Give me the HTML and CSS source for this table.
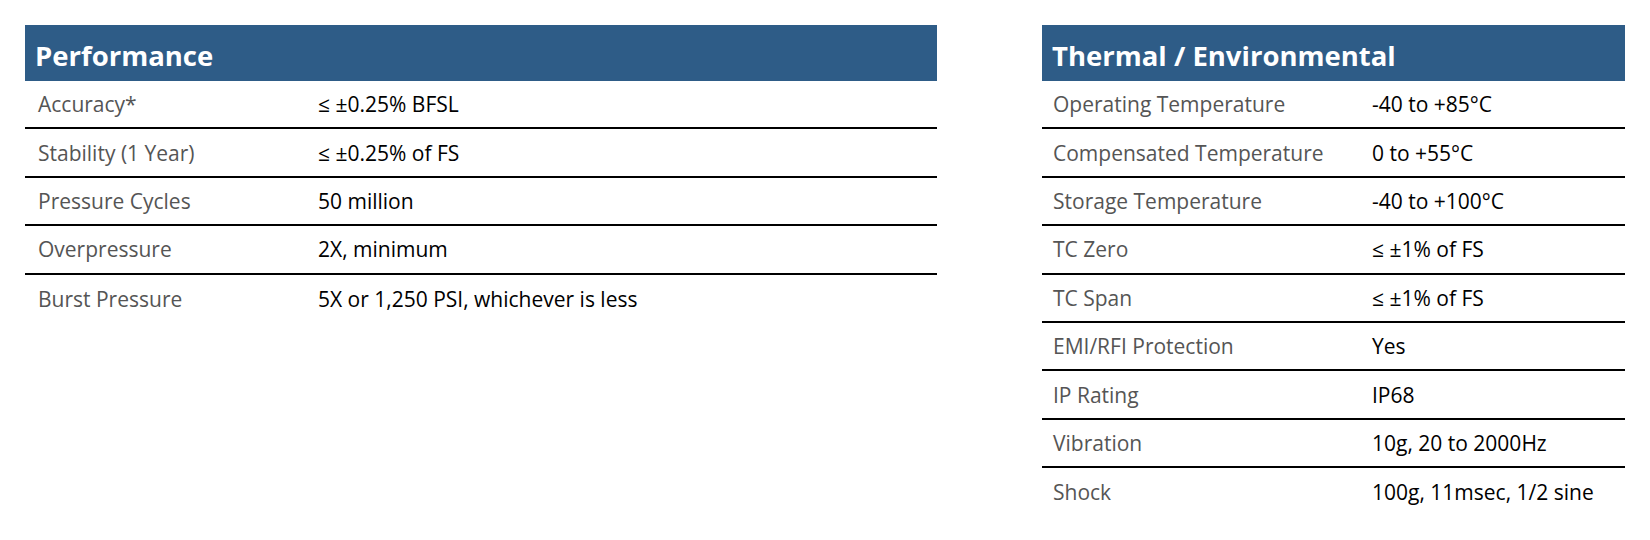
FILE: index.html
```html
<!DOCTYPE html>
<html lang="en">
<head>
<meta charset="utf-8">
<title>Specifications</title>
<link rel="stylesheet" href="styles.css">
</head>
<body>
<div class="page">
  <section class="spec spec-left">
    <h2 class="spec-title">Performance</h2>
    <div class="row"><span class="label">Accuracy*</span><span class="value">≤ ±0.25% BFSL</span></div>
    <div class="row"><span class="label">Stability (1 Year)</span><span class="value">≤ ±0.25% of FS</span></div>
    <div class="row"><span class="label">Pressure Cycles</span><span class="value">50 million</span></div>
    <div class="row"><span class="label">Overpressure</span><span class="value">2X, minimum</span></div>
    <div class="row"><span class="label">Burst Pressure</span><span class="value">5X or 1,250 PSI, whichever is less</span></div>
  </section>
  <section class="spec spec-right">
    <h2 class="spec-title">Thermal / Environmental</h2>
    <div class="row"><span class="label">Operating Temperature</span><span class="value">-40 to +85°C</span></div>
    <div class="row"><span class="label">Compensated Temperature</span><span class="value">0 to +55°C</span></div>
    <div class="row"><span class="label">Storage Temperature</span><span class="value">-40 to +100°C</span></div>
    <div class="row"><span class="label">TC Zero</span><span class="value">≤ ±1% of FS</span></div>
    <div class="row"><span class="label">TC Span</span><span class="value">≤ ±1% of FS</span></div>
    <div class="row"><span class="label">EMI/RFI Protection</span><span class="value">Yes</span></div>
    <div class="row"><span class="label">IP Rating</span><span class="value">IP68</span></div>
    <div class="row"><span class="label">Vibration</span><span class="value">10g, 20 to 2000Hz</span></div>
    <div class="row"><span class="label">Shock</span><span class="value">100g, 11msec, 1/2 sine</span></div>
  </section>
</div>
</body>
</html>
```
FILE: styles.css
```css
html, body {
  margin: 0;
  padding: 0;
  background: #ffffff;
}

body {
  font-family: "Open Sans", "Liberation Sans", sans-serif;
}

.page {
  display: flex;
  align-items: flex-start;
  padding: 25px 0 0 25px;
  gap: 105px;
}

.spec-left {
  width: 912px;
}

.spec-right {
  width: 583px;
}

.spec-title {
  margin: 0;
  height: 56px;
  box-sizing: border-box;
  background: #2e5c87;
  color: #ffffff;
  font-size: 27.5px;
  font-weight: 700;
  line-height: 32px;
  padding: 15px 0 0 10px;
}

.row {
  display: flex;
  align-items: center;
  height: 48.4px;
  box-sizing: border-box;
  border-bottom: 2px solid #000000;
  font-size: 21px;
}

.row:last-child {
  border-bottom: none;
}

.label {
  color: #555555;
  padding-left: 13px;
  box-sizing: border-box;
  flex: none;
}

.spec-left .label {
  width: 293px;
}

.spec-right .label {
  width: 330px;
  padding-left: 11px;
}

.value {
  color: #000000;
}
```
